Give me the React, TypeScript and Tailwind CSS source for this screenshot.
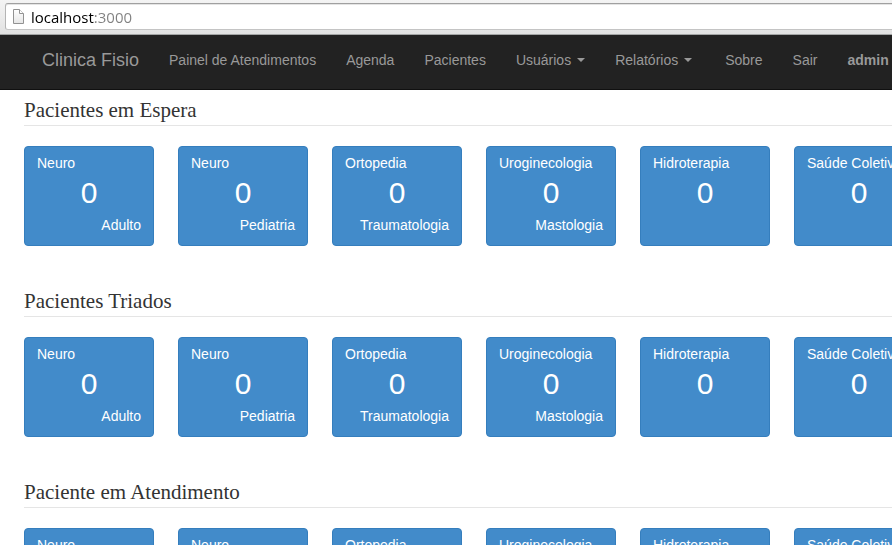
type Specialty = { name: string; detail?: string; count: number };

const specialties: Specialty[] = [
  { name: "Neuro", detail: "Adulto", count: 0 },
  { name: "Neuro", detail: "Pediatria", count: 0 },
  { name: "Ortopedia", detail: "Traumatologia", count: 0 },
  { name: "Uroginecologia", detail: "Mastologia", count: 0 },
  { name: "Hidroterapia", count: 0 },
  { name: "Saúde Coletiva", count: 0 },
];

const sections = ["Pacientes em Espera", "Pacientes Triados", "Paciente em Atendimento"];

type NavEntry = { label: string; menu?: boolean; strong?: boolean };

const mainNav: NavEntry[] = [
  { label: "Painel de Atendimentos" },
  { label: "Agenda" },
  { label: "Pacientes" },
  { label: "Usuários", menu: true },
  { label: "Relatórios", menu: true },
];

const accountNav: NavEntry[] = [
  { label: "Sobre" },
  { label: "Sair" },
  { label: "admin", strong: true },
];

function PageIcon() {
  return (
    <svg width="12" height="16" viewBox="0 0 12 16" className="shrink-0" aria-hidden="true">
      <defs>
        <linearGradient id="sheet" x1="0" y1="0" x2="0" y2="1">
          <stop offset="0" stopColor="#ffffff" />
          <stop offset="1" stopColor="#e6e6e6" />
        </linearGradient>
      </defs>
      <path d="M1.5 0.5H7.5L11.5 4.5V14.5H1.5Z" fill="url(#sheet)" stroke="#929292" />
      <path d="M7.5 0.5V4.5H11.5" fill="#fff" stroke="#929292" />
    </svg>
  );
}

function AddressBar() {
  return (
    <div className="h-[35px] border-b border-[#a3a5a5] bg-linear-to-b from-[#f4f4f4] to-[#e2e2e2] pt-[3px] pl-[5px]">
      <label className="flex h-[27px] items-center gap-[7px] rounded-l-[3px] border border-r-0 border-t-[#a0a0a0] border-b-[#c4c4c4] border-l-[#b4b4b4] bg-white pl-[6px] shadow-[inset_0_1px_0_#e4e4e4]">
        <PageIcon />
        <input
          type="text"
          aria-label="Endereço"
          defaultValue="localhost:3000"
          className="min-w-0 flex-1 bg-[linear-gradient(to_right,#000_63px,#808080_63px)] bg-clip-text font-['Open_Sans','Noto_Sans',sans-serif] text-[15px] leading-5 text-transparent caret-black outline-none"
        />
      </label>
    </div>
  );
}

function NavList({ entries }: { entries: NavEntry[] }) {
  return (
    <ul className="flex">
      {entries.map(({ label, menu, strong }) => (
        <li key={label}>
          {menu ? (
            <button
              type="button"
              aria-haspopup="menu"
              className="flex items-center gap-[6px] px-[15px] py-[15px] hover:text-white"
            >
              {label}
              <span className="border-x-4 border-t-4 border-x-transparent border-t-current" />
            </button>
          ) : (
            <a href="#pagina" className="block px-[15px] py-[15px] hover:text-white">
              {strong ? <strong>{label}</strong> : label}
            </a>
          )}
        </li>
      ))}
    </ul>
  );
}

function Navbar() {
  return (
    <nav className="flex h-[55px] items-start border-b border-[#101010] bg-[#222] pl-[27px] text-[14px] leading-5 whitespace-nowrap text-[#999]">
      <a href="#inicio" className="px-[15px] py-[15px] text-[18px] hover:text-white">
        Clinica Fisio
      </a>
      <div className="flex gap-[3px]">
        <NavList entries={mainNav} />
        <NavList entries={accountNav} />
      </div>
    </nav>
  );
}

function SpecialtyCard({ name, detail, count }: Specialty) {
  return (
    <button
      type="button"
      className="flex h-[100px] w-[130px] shrink-0 flex-col rounded-[4px] border border-[#357ebd] bg-[#428bca] px-3 py-[6px] text-[14px] leading-5 whitespace-nowrap text-white hover:bg-[#3276b1]"
    >
      <span className="self-start">{name}</span>
      <span className="mb-[2px] self-center text-[30px] leading-10">{count}</span>
      {detail && <span className="self-end">{detail}</span>}
    </button>
  );
}

export default function App() {
  return (
    <div className="h-screen overflow-hidden bg-white pr-px font-['Liberation_Sans',Arial,sans-serif]">
      <div className="overflow-hidden">
        <AddressBar />
        <Navbar />
        <main className="flex flex-col gap-10 pt-[5px] pl-6">
          {sections.map((title) => (
            <section key={title}>
              <h2 className="mb-5 border-b border-[#e5e5e5] font-['Liberation_Serif','Times_New_Roman',serif] text-[21px] leading-[30px] text-[#333]">
                {title}
              </h2>
              <div className="flex gap-6">
                {specialties.map((specialty, index) => (
                  <SpecialtyCard key={index} {...specialty} />
                ))}
              </div>
            </section>
          ))}
        </main>
      </div>
    </div>
  );
}
